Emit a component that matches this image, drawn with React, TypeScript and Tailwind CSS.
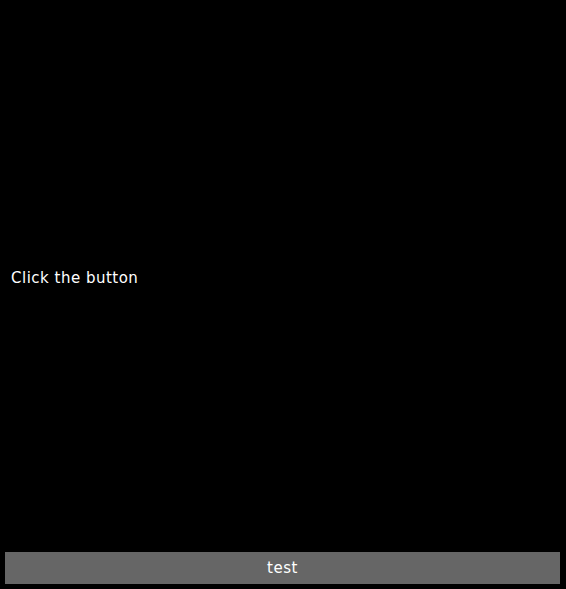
export default function App() {
    return (
        <div
            className="flex h-screen flex-col bg-black text-white"
            style={{ fontFamily: '"DejaVu Sans", sans-serif' }}
        >
            <div className="flex flex-1 items-center pl-[11px] pt-[4px]">
                <p className="text-[15px] leading-5 tracking-[0.5px]">Click the button</p>
            </div>
            <div className="pb-[5px] pl-[5px] pr-[6px]">
                <button className="h-8 w-full bg-[#666666] text-[15px] tracking-[0.5px] text-white">test</button>
            </div>
        </div>
    );
}
